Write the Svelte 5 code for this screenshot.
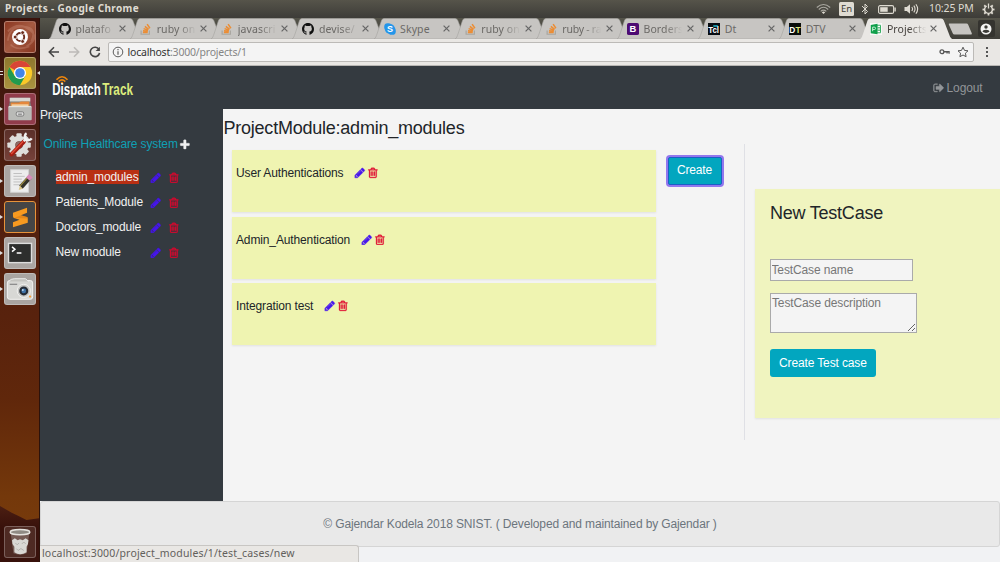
<script>
  const pencil = 'M491 1536l91-91-235-235-91 91v107h128v128h107zm523-928q0-22-22-22-10 0-17 7l-542 542q-7 7-7 17 0 22 22 22 10 0 17-7l542-542q7-7 7-17zm-54-192l416 416-832 832h-416v-416zm683 96q0 53-37 90l-166 166-416-416 166-165q36-38 90-38 53 0 91 38l235 234q37 39 37 91z';
  const trash = 'M704 736v576q0 14-9 23t-23 9h-64q-14 0-23-9t-9-23v-576q0-14 9-23t23-9h64q14 0 23 9t9 23zm256 0v576q0 14-9 23t-23 9h-64q-14 0-23-9t-9-23v-576q0-14 9-23t23-9h64q14 0 23 9t9 23zm256 0v576q0 14-9 23t-23 9h-64q-14 0-23-9t-9-23v-576q0-14 9-23t23-9h64q14 0 23 9t9 23zm128 724v-948h-896v948q0 22 7 40.5t14.5 27 10.5 8.5h832q3 0 10.5-8.5t14.5-27 7-40.5zm-672-1076h448l-48-117q-7-9-17-11h-317q-10 2-17 11zm928 32v64q0 14-9 23t-23 9h-96v948q0 83-47 143.5t-113 60.5h-832q-66 0-113-58.5t-47-141.5v-952h-96q-14 0-23-9t-9-23v-64q0-14 9-23t23-9h309l70-167q15-37 54-63t79-26h320q40 0 79 26t54 63l70 167h309q14 0 23 9t9 23z';
  const plus = 'M1600 736v192q0 40-28 68t-68 28h-416v416q0 40-28 68t-68 28h-192q-40 0-68-28t-28-68v-416h-416q-40 0-68-28t-28-68v-192q0-40 28-68t68-28h416v-416q0-40 28-68t68-28h192q40 0 68 28t28 68v416h416q40 0 68 28t28 68z';
  const signOut = 'M704 1440q0 4 1 20t.5 26.5-3 23.5-10 19.5-20.5 6.5h-320q-119 0-203.5-84.5t-84.5-203.5v-704q0-119 84.5-203.5t203.5-84.5h320q13 0 22.5 9.5t9.5 22.5q0 4 1 20t.5 26.5-3 23.5-10 19.5-20.5 6.5h-320q-66 0-113 47t-47 113v704q0 66 47 113t113 47h312l11.5 1 11.5 3 8 5.5 7 9 2 13.5zm928-544q0 26-19 45l-544 544q-19 19-45 19t-45-19-19-45v-288h-448q-26 0-45-19t-19-45v-384q0-26 19-45t45-19h448v-288q0-26 19-45t45-19 45 19l544 544q19 19 19 45z';
  const octocat = 'M8 0C3.58 0 0 3.58 0 8c0 3.54 2.29 6.53 5.47 7.59.4.07.55-.17.55-.38 0-.19-.01-.82-.01-1.49-2.01.37-2.53-.49-2.69-.94-.09-.23-.48-.94-.82-1.13-.28-.15-.68-.52-.01-.53.63-.01 1.08.58 1.23.82.72 1.21 1.87.87 2.33.66.07-.52.28-.87.51-1.07-1.78-.2-3.64-.89-3.64-3.95 0-.87.31-1.59.82-2.15-.08-.2-.36-1.02.08-2.12 0 0 .67-.21 2.2.82.64-.18 1.32-.27 2-.27.68 0 1.36.09 2 .27 1.53-1.04 2.2-.82 2.2-.82.44 1.1.16 1.92.08 2.12.51.56.82 1.27.82 2.15 0 3.07-1.87 3.75-3.65 3.95.29.25.54.73.54 1.48 0 1.07-.01 1.93-.01 2.2 0 .21.15.46.55.38A8.013 8.013 0 0016 8c0-4.42-3.58-8-8-8z';

  const tabs = [
    { icon: 'github', title: 'platafo', fade: true },
    { icon: 'stack', title: 'ruby on', fade: true },
    { icon: 'stack', title: 'javascri', fade: true },
    { icon: 'github', title: 'devise/', fade: true },
    { icon: 'skype', title: 'Skype' },
    { icon: 'stack', title: 'ruby on', fade: true },
    { icon: 'stack', title: 'ruby - ra', fade: true, tight: true },
    { icon: 'bootstrap', title: 'Borders', fade: true },
    { icon: 'tcl', title: 'Dt' },
    { icon: 'dtv', title: 'DTV' },
    { icon: 'sheet', title: 'Projects', fade: true, active: true }
  ];
  const apps = ['dash', 'chrome', 'files', 'settings', 'editor', 'sublime', 'terminal', 'camera'];
  const running = ['files', 'editor', 'sublime', 'terminal', 'camera'];
  const modules = ['admin_modules', 'Patients_Module', 'Doctors_module', 'New module'];
  const cases = ['User Authentications', 'Admin_Authentication', 'Integration test'];
  const teeth = [0, 45, 90, 135, 180, 225, 270, 315];
</script>

{#snippet fa(d)}
  <svg class="fa" viewBox="0 0 1792 1792"><path {d} fill="currentColor" stroke="currentColor" stroke-width="50" /></svg>
{/snippet}

<div class="desktop">
  <header class="panel">
    <span class="wintitle">Projects - Google Chrome</span>
    <div class="tray">
      <svg width="15" height="12" viewBox="0 0 15 12" fill="none" stroke="#a9a79f" stroke-width="1.1"><path d="M.8 4.5Q7.5-1.5 14.2 4.5M2.8 6.5Q7.5 2 12.2 6.5M4.7 8.4Q7.5 5.8 10.3 8.4" /><path d="M5.8 9.2L7.5 11l1.7-1.8Q7.5 8 5.8 9.2z" fill="#dfdbd2" stroke="none" /></svg>
      <span class="lang">En</span>
      <svg class="bt" width="8" height="12" viewBox="0 0 8 12" fill="none" stroke="#dfdbd2" stroke-width="1"><path d="M1 3l5.5 5.5L4 11V1l2.500 2.500L1 9" /></svg>
      <svg class="bat" width="18" height="9" viewBox="0 0 18 9"><rect x=".6" y=".6" width="15" height="7.800" rx="1.500" fill="none" stroke="#dfdbd2" stroke-width="1.100" /><rect x="2.200" y="2.200" width="7.500" height="4.600" fill="#dfdbd2" /><rect x="16.400" y="2.500" width="1.400" height="4" fill="#dfdbd2" /></svg>
      <svg class="vol" width="15" height="12" viewBox="0 0 15 12"><path d="M.5 4h2.300L6 1.200v9.600L2.800 8H.5z" fill="#dfdbd2" /><path d="M7.800 4q1.500 2 0 4M9.800 2.600q2.500 3.400 0 6.800M11.900 1.200q3.500 4.800 0 9.600" fill="none" stroke="#dfdbd2" stroke-width="1.100" /></svg>
      <span class="clock">10:25 PM</span>
      <svg class="gear" width="13" height="13" viewBox="-6.5 -6.5 13 13">
        {#each teeth as a}{#if a}<rect x="-.9" y="-6" width="1.800" height="2.200" fill="#dfdbd2" transform="rotate({a})" />{/if}{/each}
        <path d="M-1.800-3.500A3.900 3.900 0 1 0 1.800-3.500" fill="none" stroke="#dfdbd2" stroke-width="1.400" /><path d="M0-6v5" stroke="#dfdbd2" stroke-width="1.300" />
      </svg>
    </div>
  </header>

  <div class="workspace">
    <nav class="launcher">
      {#each apps as app}
        <div class="tile {app}">
          {#if running.includes(app)}<i class="pip"></i>{/if}
          {#if app === 'dash'}
            <svg viewBox="0 0 32 32"><path d="M3 20Q5 4 20 5T28 21M3 10Q14-1 26 8T23 26M6 24Q12 31 26 26" fill="none" stroke="#d9a08b" stroke-opacity=".3" stroke-width="2" /><circle cx="16" cy="16" r="8.500" fill="#fff" /><circle cx="16.200" cy="16" r="4.300" fill="none" stroke="#6b2b1c" stroke-width="2" /><g fill="#6b2b1c" stroke="#fff" stroke-width=".8"><circle cx="10.800" cy="16" r="2" /><circle cx="18.800" cy="11.300" r="2" /><circle cx="18.800" cy="20.700" r="2" /></g></svg>
          {:else if app === 'chrome'}
            <i class="pip two"></i><i class="focus"></i>
            <svg viewBox="0 0 32 32"><circle cx="16" cy="16" r="13" fill="#fbc928" /><path d="M16 16L4.700 9.500A13 13 0 0 1 27.300 9.500H16z" fill="#d84536" /><path d="M4.700 9.500A13 13 0 0 0 16 29l5.600-9.700L16 16l-5.600 3.200z" fill="#229a4e" /><circle cx="16" cy="16" r="6.500" fill="#fff" /><circle cx="16" cy="16" r="5.100" fill="#4285e8" /></svg>
          {:else if app === 'files'}
            <svg viewBox="0 0 32 32"><path d="M6 4h20l2 9H4z" fill="#7b7a76" /><path d="M5 4h22v4H5z" fill="#d7d7d2" /><path d="M6 9h9l2-1h9v6H6z" fill="#e5873b" /><path d="M7 11h18v4H7z" fill="#f2d2a5" /><rect x="3.500" y="13" width="25" height="15" rx="1" fill="#b9bab7" /><path d="M4 13.500h24" stroke="#eeeeeb" /><rect x="12" y="19" width="8" height="4.500" rx="1.500" fill="#ddd" stroke="#777" /><path d="M14 21.500h4" stroke="#666" /></svg>
          {:else if app === 'settings'}
            <svg viewBox="0 0 32 32"><g transform="translate(15 16)"><g fill="#dededb">{#each teeth as a}<rect x="-2.800" y="-12.500" width="5.600" height="7" rx="1" transform="rotate({a})" />{/each}</g><circle r="7" fill="none" stroke="#dededb" stroke-width="6" /><circle r="3.600" fill="#8e6b66" /></g><path d="M7 26L20 12.500" stroke="#a41e13" stroke-width="4.500" stroke-linecap="round" /><path d="M7 25L19 12.500" stroke="#e14b38" stroke-width="1.500" stroke-linecap="round" /><path d="M20 12l3-3M23 3.500a4 4 0 1 0 5.500 5.500" fill="none" stroke="#f1f1f1" stroke-width="2.500" /></svg>
          {:else if app === 'editor'}
            <svg viewBox="0 0 32 32"><rect x="6" y="4" width="19" height="24" fill="#ededed" stroke="#d4d4d4" /><path d="M9 8h9M9 11h12M9 14h9M9 17h9M9 20h7" stroke="#bebebe" /><path d="M26.500 12L17 22.500" stroke="#333229" stroke-width="5" /><path d="M25 11L16 21.500" stroke="#9c8b41" stroke-width="1.300" /><path d="M24.500 14l3-3.500" stroke="#d88aba" stroke-width="5.500" /><path d="M18.900 24.300l-4.300 1.200 1.300-4.500z" fill="#dac384" /></svg>
          {:else if app === 'sublime'}
            <svg viewBox="0 0 32 32"><path d="M8.500 11.500L23.500 6v5.500L17 14l6.500 2q.8.300.8 1.500v4.500L8.500 27v-5.500l7-2.500-6-2q-1-.4-1-2z" fill="#f89a20" /><path d="M17 14l6.500 2q.8.300.8 1.500L10 17z" fill="#d27412" opacity=".5" /></svg>
          {:else if app === 'terminal'}
            <svg viewBox="0 0 32 32"><rect x="3" y="5" width="26" height="22" fill="#ddd" /><rect x="4.500" y="6.500" width="23" height="19" fill="#2d2e2d" /><path d="M7.500 9.500l3 2.500-3 2.500M12.500 16h5" fill="none" stroke="#fff" stroke-width="1.700" /></svg>
          {:else}
            <svg viewBox="0 0 32 32"><rect x="2.500" y="7" width="27" height="20" rx="2.500" fill="#d8d8d5" stroke="#f5f5f4" /><path d="M4 8q2-3 6-3h12l3 3" fill="#c4c4c0" stroke="#eee" /><path d="M5 11h8" stroke="#888" stroke-width="1.300" /><circle cx="20" cy="18" r="7" fill="#c6c6c3" stroke="#f3f3f2" /><circle cx="20" cy="18" r="4.800" fill="#252c36" /><circle cx="20" cy="18" r="2.500" fill="#3f72a8" /><circle cx="19" cy="17" r="1" fill="#c2ddf2" /><circle cx="26.800" cy="24" r="1.200" fill="#f89b32" /></svg>
          {/if}
        </div>
      {/each}
      <div class="tile bin">
        <svg viewBox="0 0 32 32"><path d="M6 6l3 22q7 3 14 0l3-22z" fill="#c0b8b2" opacity=".35" /><path d="M7.500 14l3-2 3 2 2.500-1 3 1 3-2 3 2-.5 4-1.500 3v6q-7 4-13 0v-6l-2-3z" fill="#d9d8d4" /><path d="M11 17l2 2 2-2M18 18l2-2 2 2M12 23l2 2 3-2 3 2" fill="none" stroke="#b1afab" /><ellipse cx="16" cy="5.500" rx="10.500" ry="2.800" fill="#8f8b84" stroke="#e5e3de" stroke-width="1.500" /></svg>
      </div>
    </nav>

    <div class="browser">
      <div class="tabstrip">
        {#each tabs as tab}
          <div class="tab" class:active={tab.active}>
            <svg class="shape" viewBox="0 0 92 21"><path d="M0 21C2 20 2 18 3 16L7.500 2.500Q8.200.5 10 .5H81Q83 .5 83.800 2.500L89 16Q90 20 92 21z" /></svg>
            <svg class="fav" viewBox="0 0 16 16">
              {#if tab.icon === 'github'}<path d={octocat} fill="#111" />
              {:else if tab.icon === 'stack'}<path d="M1.500 10v5h11v-5" fill="none" stroke="#a9a6a0" stroke-width="1.600" /><path d="M3.800 12.700h6.500M4 10.200l6.500.8M4.800 7.500l6 2.200M6.500 4.500l5 4M9.500 1.500l3.700 5.500" stroke="#eb8d35" stroke-width="2" />
              {:else if tab.icon === 'skype'}<rect x=".3" y=".3" width="10" height="10" rx="4.500" fill="#2596ea" /><rect x="5.700" y="5.700" width="10" height="10" rx="4.500" fill="#2596ea" /><circle cx="8" cy="8" r="6.800" fill="#2596ea" /><text x="8" y="12.300" text-anchor="middle" font-size="12" font-weight="700" fill="#fff">S</text>
              {:else if tab.icon === 'bootstrap'}<rect width="16" height="16" rx="2.500" fill="#4d0b73" /><text x="8" y="12.500" text-anchor="middle" font-size="12.500" font-weight="700" fill="#fff">B</text>
              {:else if tab.icon === 'tcl'}<rect width="16" height="16" fill="#080d12" /><path d="M7 4h6" stroke="#20b6c8" stroke-width="2" /><text transform="translate(.3 13.500) scale(.84 1)" font-size="12.500" font-weight="700" fill="#fff">Tcl</text>
              {:else if tab.icon === 'dtv'}<rect width="16" height="16" fill="#090d0b" /><text transform="translate(.3 13) scale(.93 1)" font-size="12" font-weight="700" fill="#fff">D</text><text transform="translate(8.600 13) scale(.93 1)" font-size="12" font-weight="700" fill="#dce97d">T</text>
              {:else}<rect width="16" height="16" fill="#f8f8f7" /><path d="M9 3h5v10H9z" fill="#fff" stroke="#35ad62" stroke-width="1.300" /><path d="M10 6h4M10 8h4M10 10h4" stroke="#35ad62" /><path d="M1 2.500L10 1v14l-9-1.500z" fill="#109f4b" /><path d="M3.500 11V5.500h2.300a1.500 1.500 0 0 1 0 3.200H3.500" fill="none" stroke="#c6efd5" stroke-width="1.300" />{/if}
            </svg>
            <span class="ttl" class:fade={tab.fade} class:tight={tab.tight}>{tab.title}</span>
            <svg class="x" viewBox="0 0 7 7"><path d="M.6.600l5.800 5.800M6.400.600L.6 6.400" stroke="#666" stroke-width="1.200" /></svg>
          </div>
        {/each}
        <svg class="newtab" viewBox="0 0 25 12"><path d="M1.500.5h17q1.200 0 1.700 1.200l3.600 8.600q.4 1.200-.8 1.200H6.500q-1.300 0-1.800-1.200L.9 1.700Q.4.500 1.500.5z" fill="#c6c4c1" /></svg>
        <div class="profile"><svg viewBox="0 0 12 12"><circle cx="6" cy="6" r="5.500" fill="#f3f3f2" /><circle cx="6" cy="4" r="1.700" fill="#3c3b37" /><path d="M2.500 8.800Q2.800 6.700 6 6.700T9.500 8.800Q6 11 2.500 8.800z" fill="#3c3b37" /></svg></div>
      </div>

      <div class="toolbar">
        <svg class="nav" viewBox="0 0 12 12"><path d="M11 6H1.500M6 1.300L1.300 6 6 10.700" stroke="#464646" /></svg>
        <svg class="nav" viewBox="0 0 12 12"><path d="M1 6h9.500M6 1.300L10.700 6 6 10.700" stroke="#bdbbb8" /></svg>
        <svg class="nav" viewBox="0 0 12 12"><path d="M10 3.400A4.700 4.700 0 1 0 10.600 7" stroke="#464646" /><path d="M10.900.8v4.300H6.600z" fill="#464646" stroke="none" /></svg>
        <div class="omni">
          <svg class="info" viewBox="0 0 12 12"><circle cx="6" cy="6" r="4.800" fill="none" stroke="#5c5c5c" stroke-width="1" /><path d="M6 5.200v3.500M6 3v1.300" stroke="#5c5c5c" stroke-width="1.200" /></svg>
          <span class="url">localhost<em>:3000/projects/1</em></span>
          <svg class="key" viewBox="0 0 12 8"><circle cx="3.200" cy="4" r="2.100" fill="none" stroke="#555" stroke-width="1.400" /><path d="M5.500 4H11v2.200M8.800 4v2" fill="none" stroke="#555" stroke-width="1.400" /></svg>
          <svg class="star" viewBox="0 0 12 12"><path d="M6 1.200l1.500 3.200 3.500.4-2.600 2.400.7 3.500L6 9l-3.100 1.700.7-3.500L1 4.800l3.500-.4z" fill="none" stroke="#555" /></svg>
        </div>
        <svg class="dots" viewBox="0 0 4 12"><g fill="#555"><rect x="1" y="1" width="2" height="2" /><rect x="1" y="5" width="2" height="2" /><rect x="1" y="9" width="2" height="2" /></g></svg>
      </div>

      <div class="page">
        <div class="masthead">
          <svg class="logo" width="84" height="26" viewBox="0 0 84 26">
            <path d="M4.500 5.800Q10-.2 15.500 5.800M6.700 7.600Q10 4.200 13.300 7.600" fill="none" stroke="#ed850c" stroke-width="1.600" /><circle cx="10" cy="8.800" r="1.100" fill="#ed850c" />
            <text transform="translate(.3 21) scale(.675 1)" font-size="17" font-weight="700" fill="#fff">Dispatch</text>
            <text transform="translate(50.300 21) scale(.69 1)" font-size="17" font-weight="700" fill="#dcec7d">Track</text>
          </svg>
          <span class="logout">{@render fa(signOut)} <span>Logout</span></span>
        </div>
        <div class="content">
          <aside>
            <div class="projects">Projects</div>
            <div class="project"><span>Online Healthcare system</span>{@render fa(plus)}</div>
            <div class="modules">
              {#each modules as name, i}
                <div class="module"><span class="mname"><span class:selected={i === 0}>{name}</span></span><span class="edit">{@render fa(pencil)}</span><span class="del">{@render fa(trash)}</span></div>
              {/each}
            </div>
          </aside>
          <main>
            <h2>ProjectModule:admin_modules</h2>
            <div class="columns">
              <div class="cards">
                {#each cases as name}
                  <div class="card"><span>{name}</span><span class="edit">{@render fa(pencil)}</span><span class="del">{@render fa(trash)}</span></div>
                {/each}
              </div>
              <div class="action"><button class="btn create">Create</button></div>
              <div class="side">
                <form class="newcase">
                  <h2>New TestCase</h2>
                  <input placeholder="TestCase name" />
                  <textarea placeholder="TestCase description"></textarea>
                  <button type="button" class="btn">Create Test case</button>
                </form>
              </div>
            </div>
          </main>
        </div>
        <footer>© Gajendar Kodela 2018 SNIST. ( Developed and maintained by Gajendar )</footer>
        <div class="status">localhost:3000/project_modules/1/test_cases/new</div>
      </div>
    </div>
  </div>
</div>

<style>
  :global(body) { margin: 0; overflow: hidden; }
  .desktop, .desktop :global(*) { box-sizing: border-box; }
  .desktop { width: 1000px; height: 562px; display: flex; flex-direction: column; font: 12px/17.57px "Liberation Sans", Arial, sans-serif; letter-spacing: -.13px; color: #212529; overflow: hidden; }
  svg { display: block; flex: none; }
  svg text { font-family: "Liberation Sans", sans-serif; letter-spacing: 0; }
  .panel { height: 18px; flex: none; display: flex; justify-content: space-between; align-items: center; padding: 0 5px 0 5px; background: linear-gradient(#56544a, #3d3c38); color: #dfdbd2; font-family: "Noto Sans", sans-serif; }
  .wintitle { font-weight: 700; font-size: 10px; letter-spacing: .36px; }
  .tray { display: flex; align-items: center; }
  .lang { width: 15px; height: 14px; margin-left: 8px; border-radius: 1.500px; background: #dfdbd2; color: #3c3b37; font-size: 9.500px; line-height: 14px; text-align: center; }
  .bt { margin-left: 7px; }
  .bat { margin-left: 9px; }
  .vol { margin-left: 8px; }
  .clock { margin-left: 10px; width: 44px; font-size: 10.500px; white-space: nowrap; letter-spacing: -.1px; }
  .gear { margin-left: 9px; }

  .workspace { flex: 1; display: flex; min-height: 0; }
  .launcher { position: relative; width: 40px; flex: none; display: flex; flex-direction: column; gap: 4px; padding: 3.400px 0 4px 4px; border-right: 1px solid #2c120b; background: linear-gradient(#3b130c, #43190e 15%, #52200f 35%, #58220d 55%, #60270b 70%, #74380b 88%, #7a3d0c); }
  .launcher::before { content: ""; position: absolute; left: 0; right: 0; bottom: 0; height: 56px; background: linear-gradient(#4b1e12, #38110b 40%); clip-path: polygon(0 0, 30% 12%, 45% 17%, 68% 25%, 100% 22%, 100% 100%, 0 100%); }
  .tile { position: relative; width: 32px; height: 31.900px; flex: none; border-radius: 3px; border: 1px solid rgba(255, 255, 255, .25); background: #aaa5a2; }
  .tile > svg { width: 30px; height: 30px; }
  .dash { background: linear-gradient(135deg, #8c3822, #a55b42 50%, #873620); }
  .chrome { background: linear-gradient(#8e782e, #a9923f); }
  .files { background: #913c4b; }
  .settings { background: linear-gradient(#5b3029, #754139); }
  .sublime { background: #454546; border: 1px solid #e8933a; }
  .bin { margin-top: auto; background: rgba(120, 90, 80, .35); }
  .pip { position: absolute; left: -5px; top: 13px; border-left: 3px solid #ddd; border-top: 2.500px solid transparent; border-bottom: 2.500px solid transparent; }
  .pip.two { border: 0; width: 3px; height: 4px; border-top: 1px solid #ddd; border-bottom: 1px solid #ddd; }
  .focus { position: absolute; right: -5px; top: 12.500px; border-right: 3px solid #ddd; border-top: 2.500px solid transparent; border-bottom: 2.500px solid transparent; }

  .browser { flex: 1; min-width: 0; display: flex; flex-direction: column; }
  .tabstrip { height: 21px; flex: none; display: flex; align-items: center; padding-left: 9px; background: linear-gradient(#55544a, #3f3e39); }
  .tab { position: relative; width: 81.150px; height: 21px; flex: none; display: flex; align-items: center; padding-left: 10px; }
  .shape { position: absolute; left: 0; top: 0; width: 92px; height: 21px; }
  .shape path { fill: #c7c5c2; stroke: #a5a39f; stroke-width: .6; }
  .active .shape path { fill: #e9e7e4; stroke: none; }
  .active { z-index: 1; }
  .fav { position: relative; width: 12px; height: 12px; }
  .ttl { position: relative; width: 40px; margin-left: 4.500px; overflow: hidden; white-space: nowrap; font: 10.500px/18px "Noto Sans", sans-serif; letter-spacing: .1px; color: #6b6966; }
  .tight { letter-spacing: -.25px; }
  .active .ttl { color: #45413d; }
  .fade { -webkit-mask-image: linear-gradient(90deg, #000 55%, transparent 98%); mask-image: linear-gradient(90deg, #000 55%, transparent 98%); }
  .x { position: relative; width: 7px; height: 7px; margin-left: 3.300px; }
  .newtab { width: 25px; height: 12px; margin-left: 6px; }
  .profile { width: 17px; height: 17px; margin-left: 5px; display: flex; align-items: center; justify-content: center; border-radius: 2px; background: #34332f; }
  .profile svg { width: 12px; height: 12px; }
  .toolbar { height: 27px; flex: none; display: flex; align-items: center; padding: 0 0 1px 7.500px; background: #e9e7e4; border-bottom: 1px solid #b8b6b3; }
  .nav { width: 12px; height: 12px; margin-right: 8.500px; fill: none; stroke-width: 1.600; }
  .omni { width: 866px; height: 20px; margin-left: -1.500px; display: flex; align-items: center; padding: 0 4px 0 3px; border: 1px solid #bcbab7; border-radius: 2px; background: #f4f4f4; font: 10.500px/18px "Noto Sans", sans-serif; letter-spacing: -.21px; color: #333; }
  .info { width: 12px; height: 12px; margin-right: 4px; }
  .url { flex: 1; }
  .url em { font-style: normal; color: #858585; }
  .key { width: 11px; height: 7.500px; margin-right: 6.500px; }
  .star { width: 12px; height: 12px; }
  .dots { width: 4px; height: 12px; margin-left: 11.500px; }

  .page { position: relative; flex: 1; min-height: 0; display: flex; flex-direction: column; background: #f1f2f4; }
  .masthead { height: 43px; flex: none; display: flex; justify-content: space-between; align-items: center; padding: 0 17.500px 0 11.500px; background: #343a40; }
  .logo { margin-top: -1px; }
  .fa { display: inline-block; width: 11.710px; height: 11.710px; vertical-align: -1.500px; }
  .logout { color: #929598; display: flex; align-items: center; gap: 2px; }
  .logout span { padding-top: 2px; }
  .content { height: 392px; flex: none; display: flex; background: #343a40; }
  aside { width: 183px; flex: none; color: #f1f1f1; }
  .projects { margin-top: -2px; }
  .project { display: flex; align-items: center; gap: 1.500px; margin: 11.500px 0 0 3.500px; }
  .project span { color: #0fa0b5; }
  .modules { margin: 11.500px 0 0 15.500px; }
  .module { height: 25px; display: flex; align-items: center; }
  .mname { width: 94px; }
  .selected { background: #b92f13; padding: 0; }
  .edit { color: #4615ee; display: flex; }
  .del { color: #e0082f; display: flex; }
  .module .del { margin-left: 7px; }
  main { flex: 1; min-width: 0; background: #f4f4f4; }
  h2 { margin: 0; font-size: 18px; letter-spacing: -.23px; line-height: 21px; font-weight: 400; }
  main > h2 { padding: 9px 0 0 .5px; }
  .columns { display: flex; padding: 5px 0 0 9px; }
  .cards { width: 423.500px; margin-top: 6px; display: flex; flex-direction: column; gap: 4.600px; }
  .card { height: 62px; display: flex; align-items: flex-start; padding: 15px 0 0 4px; background: #eff4b1; box-shadow: 0 1px 2px rgba(0, 0, 0, .08); }
  .card .edit { margin: 2px 0 0 11px; }
  .card .del { margin: 2px 0 0 1.300px; }
  .action { width: 88px; padding: 12.500px 0 0 12px; }
  .btn { display: block; height: 28px; padding: 1.500px 9.500px 0; border: 0; border-radius: 3px; background: #02a6bf; color: #fff; font: inherit; letter-spacing: inherit; white-space: nowrap; }
  .create { width: 54px; height: 28px; padding: 1px 0 0; border: 1px solid #1c5fc6; border-radius: 2px; box-shadow: 0 0 0 2px #9277ee; }
  .side { flex: 1; height: 296px; padding: 45px 0 0 10px; border-left: 1.500px solid #dfe0e5; }
  .newcase { height: 229px; padding: 14px 15px; background: #f0f4bf; box-shadow: 0 1px 2px rgba(0, 0, 0, .08); }
  .newcase h2 { padding-left: .5px; }
  input, textarea { display: block; border: 1px solid #aaa; border-radius: 0; background: #f4f4f4; font: inherit; letter-spacing: inherit; outline: 0; }
  input::placeholder, textarea::placeholder { color: #777; opacity: 1; }
  input { width: 143px; height: 22px; margin: 35px 0 12px; padding: 0 1px; }
  textarea { width: 147px; height: 40px; margin: 0 0 16px; padding: 1px 1.500px; }
  footer { height: 46px; flex: none; display: flex; align-items: center; justify-content: center; padding-top: 1px; border: 1px solid #d5d5d5; border-radius: 3px; background: #e9e9e9; color: #6c757d; }
  .status { position: absolute; left: 0; bottom: 0; width: 319px; height: 17px; padding-left: 2px; border: 1px solid #c8c6c3; border-left: 0; border-bottom: 0; border-radius: 0 3px 0 0; background: #e9e7e4; font: 10.500px/15px "Noto Sans", sans-serif; letter-spacing: .16px; color: #62605c; white-space: nowrap; }
</style>
